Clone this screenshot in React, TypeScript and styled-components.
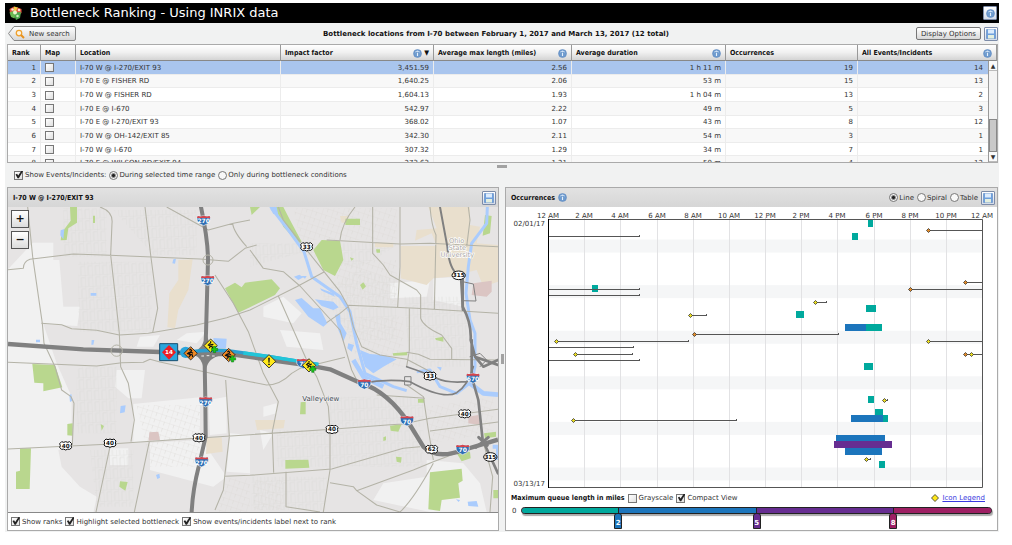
import React from "react";
import styled, { createGlobalStyle, css } from "styled-components";

const GlobalStyle = createGlobalStyle`
  *, *::before, *::after { box-sizing: border-box; }
  body {
    margin: 0;
    background: #fff;
    color: #333;
    font: 7px/10px "DejaVu Sans", Verdana, sans-serif;
  }
  button, input, output { font: inherit; color: inherit; margin: 0; }
`;

const boldFace = css`
  font-family: "DejaVu Sans Condensed", "DejaVu Sans", sans-serif;
  font-weight: 700;
  color: #111;
`;

const Page = styled.div`
  margin: 3px 13px 0 5px;
  background: #f1f2f2;
`;

const TitleBar = styled.header`
  display: flex;
  align-items: center;
  gap: 8px;
  height: 20px;
  padding: 0 2px 0 4px;
  background: #000;
`;

const Title = styled.h1`
  flex: 1;
  margin: 0;
  color: #fff;
  font-size: 13px;
  line-height: 18px;
  font-weight: 400;
`;

const IconButton = styled.button`
  display: grid;
  place-items: center;
  width: 14px;
  height: 14px;
  padding: 0;
  border: 1px solid #7d8ca8;
  border-radius: 1px;
  background: linear-gradient(#fff, #d3dbe8);
`;

const Toolbar = styled.div`
  display: flex;
  align-items: center;
  height: 21px;
  padding: 0 1px 0 3px;
`;

const Heading = styled.h2`
  flex: 1;
  margin: 0;
  text-align: center;
  font-size: 7px;
  line-height: 10px;
  color: #111;
`;

const BackButton = styled.button`
  position: relative;
  display: flex;
  align-items: center;
  gap: 4px;
  width: 68px;
  height: 15px;
  padding: 0 0 0 7px;
  border: 0;
  background: none;
  white-space: nowrap;

  & > svg, & > span { position: relative; }
  & > svg:first-child { position: absolute; left: 0; top: 0; }
`;

const OptionsButton = styled.button`
  width: 65px;
  height: 13px;
  margin-right: 3px;
  padding: 0;
  border: 1px solid #777;
  border-radius: 2px;
  background: linear-gradient(#fff, #d8d8d8);
  line-height: 10px;
  white-space: nowrap;
`;

const GridFrame = styled.div`
  position: relative;
  height: 119px;
  margin: 0 1px 0 2px;
  overflow: hidden;
  border: 1px solid #aaa;
  background: #fff;
`;

const Grid = styled.table`
  width: 100%;
  height: 125px;
  table-layout: fixed;
  border-collapse: separate;
  border-spacing: 0;
`;

const HeadCell = styled.th`
  ${boldFace}
  height: 16px;
  padding: 1px 4px 0;
  border-right: 1px solid #999;
  border-bottom: 1px solid #888;
  background: linear-gradient(#fff, #f0f0f0 50%, #d4d4d4);
  text-align: left;
  white-space: nowrap;
`;

const HeadInner = styled.div`
  display: flex;
  align-items: center;
  justify-content: space-between;
`;

const HeadTools = styled.span`
  display: flex;
  align-items: center;
  gap: 2px;
`;

const Row = styled.tr<{ $selected?: boolean }>`
  background: ${(p) => (p.$selected ? "#a9c5ee" : "#fff")};
  &:nth-child(even) { background: #f8f8f8; }
`;

const Cell = styled.td<{ $align?: "right"; $last?: boolean }>`
  padding: 1px ${(p) => (p.$last ? 13 : 4)}px 0 4px;
  border-right: 1px solid #ececec;
  border-bottom: 1px solid #ececec;
  text-align: ${(p) => p.$align ?? "left"};
  white-space: nowrap;
`;

const ScrollBar = styled.div`
  position: absolute;
  top: 16px;
  right: 0;
  bottom: 0;
  width: 9px;
  display: flex;
  flex-direction: column;
  justify-content: space-between;
  border-left: 1px solid #999;
  background: #f4f4f4;
`;

const ScrollButton = styled.button`
  height: 10px;
  padding: 0;
  border: 0;
  border-bottom: 1px solid #bbb;
  background: #fafafa;
  font-size: 6px;
  line-height: 9px;
`;

const ScrollThumb = styled.div`
  height: 33px;
  margin-top: auto;
  border: 1px solid #888;
  background: #c9c9c9;
`;

const Handle = styled.div<{ $vertical?: boolean }>`
  width: ${(p) => (p.$vertical ? 3 : 10)}px;
  height: ${(p) => (p.$vertical ? 10 : 3)}px;
  background: #a2a2a2;
  align-self: center;
  justify-self: center;
`;

const EventsBar = styled.section`
  display: flex;
  flex-direction: column;
  height: 24px;
  padding-top: 2px;
`;

const Options = styled.div`
  display: flex;
  align-items: center;
  gap: 3px;
`;

const EventsOptions = styled(Options)`
  padding: 2px 0 0 9px;
`;

const Choice = styled.label`
  display: inline-flex;
  align-items: center;
  gap: 2px;
  white-space: nowrap;
`;

const RadioChoice = styled(Choice)`
  gap: 1px;
`;

const CheckInput = styled.input.attrs({ type: "checkbox" })`
  appearance: none;
  display: block;
  position: relative;
  flex: none;
  width: 9px;
  height: 9px;
  border: 1px solid #777;
  background: linear-gradient(135deg, #fff, #e0e0e0);
  &:checked::after {
    content: "";
    position: absolute;
    left: 0;
    top: -1px;
    width: 8px;
    height: 8px;
    background: #222;
    clip-path: polygon(6% 50%, 26% 42%, 40% 64%, 82% 0, 100% 8%, 48% 96%, 32% 96%);
  }
`;

const RadioInput = styled.input.attrs({ type: "radio" })`
  appearance: none;
  flex: none;
  width: 9px;
  height: 9px;
  border: 1px solid #777;
  border-radius: 50%;
  background: #f8f8f8;
  &:checked { background: radial-gradient(#222 0 1px, #f8f8f8 3px); }
`;

const Panels = styled.main`
  display: grid;
  grid-template-columns: 492fr 6px 493fr;
  padding: 0 1px 1px 2px;
`;

const Panel = styled.section`
  display: flex;
  flex-direction: column;
  min-width: 0;
  border: 1px solid #aaa;
  background: #fff;
`;

const PanelHead = styled.header`
  display: flex;
  align-items: center;
  justify-content: space-between;
  height: 19px;
  padding: 0 2px 0 5px;
  background: linear-gradient(#e2e2e2, #d6d6d6);
`;

const PanelTitle = styled.h3`
  ${boldFace}
  display: flex;
  align-items: center;
  gap: 3px;
  margin: 0;
  font-size: 7px;
  line-height: 10px;
`;

const MapFrame = styled.div`
  position: relative;
  & > svg { display: block; width: 100%; height: auto; }
`;

const ZoomButtons = styled.div`
  position: absolute;
  left: 3px;
  top: 3px;
  display: grid;
  gap: 3px;
`;

const ZoomButton = styled.button`
  width: 18px;
  height: 18px;
  padding: 0;
  border: 1px solid #555;
  background: linear-gradient(#fff, #dcdcdc);
  color: #111;
  font-weight: 700;
  font-size: 11px;
  line-height: 14px;
`;

const MapFooter = styled.footer`
  display: flex;
  flex: 1;
  align-items: center;
  gap: 3px;
  min-height: 18px;
  padding: 0 3px;
  border-top: 1px solid #888;
`;

const ChartSvg = styled.svg`
  display: block;
  width: 100%;
  height: auto;
`;

const LegendRow = styled.div`
  display: flex;
  align-items: center;
  gap: 3px;
  height: 16px;
  padding: 0 12px 0 5px;
`;

const LegendTitle = styled.span`
  ${boldFace}
`;

const LegendLink = styled.a`
  display: flex;
  align-items: center;
  gap: 3px;
  margin-left: auto;
  color: #3a3ae0;
`;

const SliderRow = styled.div`
  display: flex;
  gap: 5px;
  padding: 0 5px 0 6px;
`;

const Track = styled.div`
  position: relative;
  display: flex;
  flex: 1;
  height: 7px;
  margin-top: 1px;
  border: 1px solid #222;
  border-radius: 4px;
  background: #9e1f63;
  box-shadow: 1px 2px 1px #aaa;
`;

const Segment = styled.div<{ $color: string; $size: number; $edge?: "start" | "end" }>`
  flex: ${(p) => p.$size} 1 0;
  background: ${(p) => p.$color};
  border-right: ${(p) => (p.$edge === "end" ? 0 : 1)}px solid #222;
  border-radius: ${(p) => (p.$edge === "start" ? "3px 0 0 3px" : p.$edge === "end" ? "0 3px 3px 0" : 0)};
`;

const Flag = styled.output<{ $color: string }>`
  position: absolute;
  top: 5px;
  width: 8px;
  height: 16px;
  padding-top: 4px;
  transform: translateX(-50%);
  background: ${(p) => p.$color};
  border: 1px solid #222;
  border-radius: 3px 3px 0 0;
  color: #fff;
  font-weight: 700;
  text-align: center;
`;

const RangeInput = styled.input.attrs({ type: "range" })`
  position: absolute;
  left: 0;
  top: 0;
  width: 100%;
  height: 100%;
  opacity: 0;
`;

const InfoIcon = () => (
  <svg width="9" height="9" viewBox="0 0 18 18" aria-hidden="true">
    <circle cx="9" cy="9" r="8" fill="#6f9bce" stroke="#5583bb" />
    <path d="M4.500 6a6 5 0 0 1 9 0" stroke="#c7ddf4" strokeWidth="2" fill="none" />
    <path d="M9 4.500v2M9 8v6" stroke="#e6f0fb" strokeWidth="2.200" />
  </svg>
);

const SaveIcon = () => (
  <svg width="10" height="10" viewBox="0 0 20 20" aria-hidden="true">
    <path d="M1 1h18v18H1z" fill="#6fa0dc" stroke="#4a7abb" />
    <path d="M4 1h12v8H4z" fill="#dcebfc" />
    <path d="M4 12h12v7H4z" fill="#e4eedd" />
  </svg>
);

const LogoIcon = () => (
  <svg width="13" height="14" viewBox="0 0 26 28" aria-hidden="true">
    <path d="M1 6l9-5 5 7-6 8-7-2z" fill="#e2523c" />
    <path d="M10 1l8 2 2 7-6 4-5-5z" fill="#f0cf45" />
    <path d="M1 13l8-3 5 6-3 9-7-3z" fill="#6cb852" />
    <path d="M17 3l8 3v8l-6 5-6-6z" fill="#e35a42" />
    <path d="M13 13l11-1-2 12-8 4-3-8z" fill="#4fa84f" />
    <circle cx="12" cy="13" r="4" fill="#eef5cf" />
    <circle cx="7" cy="7" r="2.500" fill="#fbe3dc" />
    <circle cx="20" cy="8" r="2.500" fill="#fbe3dc" />
    <circle cx="17" cy="20" r="2.500" fill="#d3efc0" />
  </svg>
);

const columns = [
  { name: "Rank", width: 33 },
  { name: "Map", width: 35 },
  { name: "Location", width: 205 },
  { name: "Impact factor", width: 153, info: true, sort: true },
  { name: "Average max length (miles)", width: 138, info: true },
  { name: "Average duration", width: 154, info: true },
  { name: "Occurrences", width: 132 },
  { name: "All Events/Incidents", width: 139, info: true },
];

const rows = [
  ["1", "I-70 W @ I-270/EXIT 93", "3,451.59", "2.56", "1 h 11 m", "19", "14"],
  ["2", "I-70 E @ FISHER RD", "1,640.25", "2.06", "53 m", "15", "13"],
  ["3", "I-70 W @ FISHER RD", "1,604.13", "1.93", "1 h 04 m", "13", "2"],
  ["4", "I-70 E @ I-670", "542.97", "2.22", "49 m", "5", "3"],
  ["5", "I-70 E @ I-270/EXIT 93", "368.02", "1.07", "43 m", "8", "12"],
  ["6", "I-70 W @ OH-142/EXIT 85", "342.30", "2.11", "54 m", "3", "1"],
  ["7", "I-70 W @ I-670", "307.32", "1.29", "34 m", "7", "1"],
  ["8", "I-70 E @ WILSON RD/EXIT 94", "273.63", "1.21", "50 m", "4", "12"],
];

/* Map artwork: three units to the pixel. */
const ROAD = "#b4b3a7";
const PARK = "#b9d78e";
const WATER = "#aaccfd";
const TAN = "#e9dfcd";
const LIGHT = "#f1f1f1";

const Interstate = ({ x, y, n }: { x: number; y: number; n: string }) => (
  <g transform={`translate(${x} ${y})`}>
    <path d="M-18-13Q-9-10 0-14Q9-10 18-13Q24 2 12 10L0 16L-12 10Q-24 2-18-13z" fill="#2f6fb5" stroke="#f4f4f4" strokeWidth="2" />
    <path d="M-18-13Q-9-10 0-14Q9-10 18-13L20-7H-20z" fill="#d8454b" />
    <text y="9" fontSize="18" fontWeight="700" fill="#fff" textAnchor="middle">{n}</text>
  </g>
);

const Route = ({ x, y, n }: { x: number; y: number; n: string }) => (
  <g transform={`translate(${x} ${y})`}>
    <path d="M-12-12Q-6-8 0-12Q6-8 12-12L18-6Q14 0 18 6L12 11Q6 9 0 13Q-6 9-12 11L-18 6Q-14 0-18-6z" fill="#fff" stroke="#111" strokeWidth="3" />
    <text y="6" fontSize="17" fontWeight="700" fill="#111" textAnchor="middle">{n}</text>
  </g>
);

const StateRoute = ({ x, y, n }: { x: number; y: number; n: string }) => (
  <g transform={`translate(${x} ${y})`}>
    <ellipse rx="20" ry="13" fill="#fff" stroke="#111" strokeWidth="3" />
    <text y="6" fontSize="17" fontWeight="700" fill="#111" textAnchor="middle">{n}</text>
  </g>
);

type SignProps = { x: number; y: number; kind: "alert" | "work" | "crash"; plus?: boolean };
const Sign = ({ x, y, kind, plus }: SignProps) => (
  <g transform={`translate(${x} ${y})`}>
    <path d="M0-20L20 0L0 20L-20 0z" fill={kind === "work" ? "#f08a24" : "#ffe81a"} stroke="#222" strokeWidth="2.500" strokeLinejoin="round" />
    {kind === "alert" && <path d="M-2.500-11H2.500L1.500 4H-1.500zM-2.500 7H2.500V11H-2.500z" fill="#111" />}
    {kind === "work" && <path d="M-4-9l4-3 3 4-3 4 7 4M0-4l-6 6 5 4-5 6M-3 2l8 3 1 6M-11 2l8-6" stroke="#111" strokeWidth="3.500" fill="none" />}
    {kind === "crash" && <path d="M0-13v5M-2-7l-5 5 6 3-3 7M-2-6l6 4 4-3M-1 1l6 3 1 6" stroke="#111" strokeWidth="3.500" fill="none" />}
    {plus && <path d="M8 2h7v6h6v7h-6v6H8v-6H2V8h6z" fill="#19c51b" stroke="#0c6f12" strokeWidth="1.500" />}
  </g>
);

const MapArt = () => (
  <svg viewBox="24 21 1470 915" role="img" aria-label="Map of bottleneck locations">
    <defs>
      <pattern id="streets" width="22" height="34" patternUnits="userSpaceOnUse" patternTransform="rotate(-3)">
        <path d="M0 0H22M0 0V34M11 8V34M11 8H22" stroke="#d9d8d4" strokeWidth="1.400" fill="none" />
      </pattern>
      <pattern id="streets2" width="30" height="20" patternUnits="userSpaceOnUse" patternTransform="rotate(18)">
        <path d="M0 0H30M0 0V20M15 0V12" stroke="#dad9d5" strokeWidth="1.400" fill="none" />
      </pattern>
    </defs>
    <path d="M0 0H1500V940H0z" fill="#e6e4e4" />

    <g fill={LIGHT}>
      <path d="M24 208L98 128H160V180H178L190 320H240L232 378L130 372L170 490L215 590V735L175 750L185 800L240 860L290 890L280 940H24z" />
      <path d="M350 510H435L425 595H385L345 560zM400 612L600 592V712L400 728zM450 728L605 720L680 830L640 860L450 810zM625 600L680 590V700L630 705zM690 700L750 705V820L680 815zM330 745H385V795H330z" />
      <path d="M560 400L620 395L590 430L530 420zM420 410L480 405L460 440L410 440z" />
      <path d="M790 320L850 290L905 340L880 370L790 350zM840 390L960 400L970 450L860 440zM1300 235L1390 230V320L1300 300zM1170 250L1290 240L1280 290L1170 295zM790 620L830 610V640L790 650zM1150 850L1280 830V780L1390 790L1440 850L1460 936H1290L1120 900zM780 690L820 700L790 750z" />
    </g>
    <g fill="url(#streets)">
      <path d="M190 25H320V170H190zM235 185H455V395H235zM340 30H590V165H460zM230 500H350V700H230zM270 750H400V920H290z" />
      <path d="M1200 130H750V200L900 160L1190 240V420H1060L960 280zM1210 290H1400V500H1230zM830 690H1270V800H1000L830 800zM990 590H1270V680H990zM755 830H980V930H755z" />
    </g>
    <g fill="url(#streets2)">
      <path d="M880 25H1190V120H900zM980 180H1190V310H1050zM410 615H600V800H450zM680 835H750V935H650zM760 840H850V930H760zM1020 350H1210V500H1080zM1280 620L1480 590V700L1290 730z" />
    </g>

    <g fill={TAN}>
      <path d="M535 180L578 178L565 270L535 330L525 385L502 382L508 280L535 240z" />
      <path d="M1285 21H1410V75L1440 80L1430 130L1495 135V245L1450 260L1430 210L1350 230L1300 235L1280 255L1202 235V138H1310L1295 100L1245 122L1250 90L1310 85zM1125 128h55v14h-55zM1020 48h25v20h-20zM620 713L665 712L668 755L618 762zM765 660h90l-4 25-80 5z" />
    </g>
    <g fill="#dbc5c3">
      <path d="M1420 250L1475 242V275L1460 290L1415 285zM448 697L475 695L480 720L446 722zM1405 650L1435 645L1440 675L1405 670z" />
    </g>
    <g fill={PARK}>
      <path d="M210 21H231V68L205 85L200 120L182 121L185 98L212 62zM279 47h6v22h-6zM675 265L705 248L725 262L735 248L750 246L815 238L840 265L825 285L750 322L715 338z" />
      <path d="M97 492L165 495L187 562L130 574V550L103 548zM202 672L218 670V707L202 706zM60 745H93L89 867H48V815L60 812zM302 672L312 678L305 692zM360 844L383 846L376 872L358 860z" />
      <path d="M750 21H780L755 45zM825 21H850L870 60L905 125L895 130L850 80zM940 150L965 120L1020 122L1030 180L1005 228L970 210zM1036 56H1080V75H1036zM1050 172l12 4-8 6zM1080 255l10-8 8 12-10 10zM1128 148h12v10h-10zM1455 45L1475 48L1470 100L1448 107zM1305 415L1330 410V425L1308 420zM1178 460L1222 456V466L1180 467z" />
      <path d="M902 607L917 605V643H900zM856 780L925 779L928 803L856 806zM1254 597H1273V608H1254zM1170 677L1205 673L1195 695L1172 692zM1188 770L1205 772L1203 788L1190 785zM1150 712l8-3v12l-8 2zM1290 817L1385 806L1388 842L1375 850L1380 893L1325 900L1320 933L1285 928zM1370 760L1410 755L1412 775L1385 784zM1452 700L1488 695V710L1455 715zM1480 870h14v25h-14z" />
    </g>
    <g fill={WATER}>
      <path d="M182 91L193 87L190 118L181 106zM520 178L528 176L525 191L517 190zM272 279h17v8h-17zM108 419h12v8h-12zM275 420h8l-3 14h-6zM208 585l6-3 3 20-7 4zM362 618L377 616L374 637L360 640zM640 414L680 416L678 445L645 443zM468 825l10-4 2 12-8 4z" />
      <path d="M808 21H830L835 45L820 42zM882 230L898 224L910 232L895 240zM905 228h15l-5 8zM885 300L905 294L940 325L960 325L982 370L970 380L925 350zM945 298L1000 305L1016 322L1000 330L965 318zM960 265L1000 280L1005 290L965 272zM1005 345L1020 342L1022 370L1040 400L1030 425L1015 390zM1045 430L1062 435L1055 455L1042 445zM1080 450L1110 462L1150 465L1190 478L1150 500L1120 520L1095 500zM1310 500L1325 502L1322 512zM1403 905L1430 903L1435 920L1405 918zM1368 898l12 2-4 6z" />
    </g>
    <g fill="none" stroke={WATER} strokeLinejoin="round">
      <path d="M815 25L865 90L912 155L935 230L1020 290L1050 335L1070 430L1095 520L1180 560L1220 572" strokeWidth="9" />
      <path d="M1462 21L1460 70L1415 130L1405 200L1398 280L1410 360L1425 400L1425 500L1415 545L1370 580L1320 560L1290 510L1250 515" strokeWidth="9" />
      <path d="M1410 550L1450 580L1494 584" strokeWidth="14" />
      <path d="M1060 480L1090 530L1150 560" strokeWidth="14" />
      <path d="M1478 740l16 0v40" strokeWidth="12" />
    </g>

    <g fill="none" stroke={ROAD} strokeWidth="3.200" strokeLinejoin="round">
      <path d="M83 21L98 170L127 370L132 430L165 500L185 570L213 590L222 610L217 735M24 209L70 205Q70 185 90 178L220 162L330 166L600 177L685 184L735 145L770 135M300 21Q340 35 336 70L332 165L345 280L358 400L362 500L385 550L403 660L393 725M435 21L452 165L473 325L458 398" />
      <path d="M124 370L185 374L215 386L290 391L358 405L445 400L590 375L680 353L750 330L890 260L972 216M24 487L290 498L365 488L430 487L450 478L480 486L680 530L750 545L800 555Q840 555 875 520L900 505L1035 472" />
      <path d="M24 747L320 733L610 713L750 704L995 688L1170 674L1210 672L1290 655L1494 628M330 740L288 936M448 725L403 936M500 21L625 90L700 70L750 60M698 70Q700 95 740 140M645 225L700 310L745 395L790 520L835 605L817 695L821 818M835 288L920 480M677 540L688 710L674 830L670 870L645 930M674 829L750 826L995 807L1210 745L1260 740" />
      <path d="M750 150L790 205L850 215L900 258L1020 390L1055 510L1070 540M835 21L850 60L900 125L972 215L1020 275L1045 320L1060 380L1085 440L1140 465L1220 478L1300 520M1065 21Q1025 70 1020 120M980 120L1200 132L1290 130L1494 140M1118 21V160L1150 195L1170 225L1250 270L1262 285V355Q1270 380 1325 405L1355 445V480M1200 21V200L1193 322M1290 21Q1295 80 1308 105L1303 328M1405 21L1410 60L1400 140M1045 316L1250 325L1494 340M1045 320L1020 340L980 368" />
      <path d="M1228 325V450L1220 500M1220 457L1255 463L1290 478L1494 480M920 480L950 530L985 620L990 690V810L970 936M858 815V920L960 936M990 848L1060 860L1070 872L1130 915L1200 936M1070 872L1240 810L1300 785L1420 740M1200 936Q1240 900 1300 790M1220 555L1270 590L1285 690L1300 780M1290 693L1494 666M1130 585L1275 595M1448 720L1478 830L1470 936" />
    </g>

    <g fill="none" stroke="#808080" strokeLinecap="round" strokeLinejoin="round">
      <path d="M603 21Q624 120 624 180L618 400L614 490L616 600L617 710L596 800Q578 870 575 936" strokeWidth="12" />
      <path d="M24 432L250 448L480 456L620 462L690 462L810 480L930 497L990 508L1080 548Q1165 575 1230 675L1270 740Q1310 780 1390 750L1494 719" strokeWidth="13" strokeLinecap="butt" />
      <path d="M618 408Q616 446 580 460Q610 470 615 508Q620 470 665 462Q624 448 618 408z" fill="#808080" strokeWidth="7" />
      <path d="M1320 21L1342 140Q1348 215 1382 230L1388 330" strokeWidth="6" />
      <path d="M1388 235V320Q1415 370 1412 420L1425 470L1494 495M1415 420V530L1435 600L1448 720L1494 820M1425 470L1450 500L1494 480" strokeWidth="8" />
      <path d="M1085 550Q1160 535 1230 545Q1330 600 1370 578Q1405 555 1420 500M1220 500Q1280 520 1310 535T1400 545L1415 530" strokeWidth="5" />
      <path d="M1388 245L1420 252L1428 303L1385 302" strokeWidth="3" />
      <path d="M1428 742L1465 712M1436 712L1462 736" strokeWidth="9" />
      <path d="M1215 530h18v25h-18zM1410 470L1440 460L1460 480L1440 500" strokeWidth="3" />
    </g>
    <g fill="none" stroke={ROAD} strokeWidth="3">
      <circle cx="350" cy="452" r="17" />
      <circle cx="624" cy="180" r="15" />
    </g>
    <path d="M604 468h8M620 467h8M636 468h8" stroke="#eee" strokeWidth="3" />

    <path d="M555 457Q640 446 700 454L810 470L955 493" fill="none" stroke="#2d9fd0" strokeWidth="10" />
    <path d="M730 459L810 470L955 493" fill="none" stroke="#22c5d8" strokeWidth="10" />
    <circle cx="557" cy="457" r="17" fill="#2aa5dc" />

    <Interstate x={611} y={61} n="270" />
    <Interstate x={623} y={241} n="270" />
    <Interstate x={617} y={605} n="270" />
    <Interstate x={605} y={785} n="270" />
    <Interstate x={910} y={490} n="70" />
    <Interstate x={1093} y={552} n="70" />
    <Interstate x={1221} y={662} n="70" />
    <Interstate x={1388} y={748} n="70" />
    <Interstate x={1419} y={534} n="670" />
    <Route x={197} y={737} n="40" />
    <Route x={330} y={729} n="40" />
    <Route x={597} y={713} n="40" />
    <Route x={920} y={140} n="33" />
    <Route x={1290} y={528} n="33" />
    <Route x={1394} y={641} n="40" />
    <Route x={996} y={688} n="40" />
    <Route x={1295} y={748} n="62" />
    <StateRoute x={1376} y={226} n="315" />
    <StateRoute x={1471} y={771} n="315" />

    <g fontSize="20" fill="#aaa69f" stroke="#fff" strokeWidth="4" paintOrder="stroke" textAnchor="middle">
      <text x="1370" y="129">Ohio</text>
      <text x="1372" y="150">State</text>
      <text x="1372" y="171">University</text>
    </g>
    <text x="907" y="604" fontSize="21" fill="#414852" stroke="#f3f3f3" strokeWidth="3" paintOrder="stroke">Valleyview</text>

    <g>
      <path d="M479 431H533V482H479z" fill="#2aa5dc" stroke="#184f70" strokeWidth="3" />
      <path d="M507 435L528 457L507 479L486 457z" fill="#ed1c24" />
      <text x="507" y="463" fontSize="17" fontWeight="700" fill="#fff" textAnchor="middle">14</text>
      <path d="M534 450L541 457L534 464z" fill="#184f70" />
    </g>
    <Sign x={572} y={460} kind="work" />
    <Sign x={632} y={437} kind="crash" plus />
    <Sign x={686} y={465} kind="work" plus />
    <Sign x={807} y={484} kind="alert" />
    <Sign x={927} y={496} kind="crash" plus />
  </svg>
);

const TEAL = "#00a99d";
const BLUE = "#1c75bc";
const PURPLE = "#662d91";
const MAROON = "#9e1f63";

const plot = { left: 548, right: 982, top: 220, bottom: 487, days: 41 };
const dayY = (day: number) => plot.top + (day * (plot.bottom - plot.top)) / plot.days;
const hours = ["12 AM", "2 AM", "4 AM", "6 AM", "8 AM", "10 AM", "12 PM", "2 PM", "4 PM", "6 PM", "8 PM", "10 PM", "12 AM"];
const hourX = (i: number) => Math.round(plot.left + (i * (plot.right - plot.left)) / 12);

const bars: [number, number, number, string][] = [
  [0, 868, 873, TEAL], [2, 852, 858, TEAL], [10, 592, 598, TEAL], [13, 866, 876, TEAL],
  [14, 796, 804, TEAL], [16, 845, 866, BLUE], [16, 866, 882, TEAL], [22, 864, 873, TEAL],
  [27, 868, 874, TEAL], [29, 875, 883, TEAL], [30, 851, 883, BLUE], [30, 883, 888, TEAL],
  [33, 836, 885, BLUE], [34, 834, 892, PURPLE], [35, 845, 882, BLUE], [37, 879, 885, TEAL],
];

const YELLOW = "#e9dc1f";
const ORANGE = "#e08a28";
const events: [number, number, number, string?][] = [
  [236, 549, 640], [289, 549, 640], [295, 549, 640], [315, 690, 707, YELLOW],
  [334, 694, 839, ORANGE], [341, 556, 689, YELLOW], [347, 549, 634], [354, 575, 633, YELLOW],
  [360, 549, 640], [420, 573, 737, YELLOW], [230, 928, 982, ORANGE], [282, 965, 982, ORANGE],
  [289, 910, 982, ORANGE], [302, 815, 827, YELLOW], [341, 928, 982, YELLOW], [354, 965, 982, ORANGE],
  [354, 971, 982, YELLOW], [400, 884, 888, YELLOW], [459, 866, 871, YELLOW],
];

const OccurrenceChart = () => (
  <ChartSvg viewBox="506 207 491 283" role="img" aria-label="Occurrences by day and hour">
    {[3, 10, 17, 24, 31, 38].map((d) => (
      <rect key={d} x={plot.left} y={dayY(d)} width={plot.right - plot.left} height={dayY(2) - plot.top} fill="#f5f6f7" />
    ))}
    {hours.map((label, i) => (
      <g key={i}>
        <path d={`M${hourX(i) + 0.5} 217V${plot.bottom}`} stroke="#e2e2e4" />
        <text x={hourX(i)} y="218" fontSize="7" fill="#333" textAnchor="middle">{label}</text>
      </g>
    ))}
    {bars.map(([day, x1, x2, color], i) => (
      <rect key={i} x={x1} y={Math.round(dayY(day))} width={x2 - x1} height="7" fill={color} />
    ))}
    {events.map(([y, x1, x2, color], i) => (
      <g key={i}>
        <path d={`M${x1} ${y + 0.5}H${x2}`} stroke="#555" />
        {x2 < plot.right && <path d={`M${x2 - 0.5} ${y - 1}v2`} stroke="#555" />}
        {color && <path d={`M${x1 + 0.5} ${y - 1.5}l2 2l-2 2l-2-2z`} fill={color} stroke="#333" strokeWidth="0.8" />}
      </g>
    ))}
    <path d="M548 219.500H982.500V487.500H548" fill="none" stroke="#555" />
    <path d="M548.500 219V488" stroke="#000" />
    <text x="545" y="226" fontSize="7" fill="#333" textAnchor="end">02/01/17</text>
    <text x="545" y="486" fontSize="7" fill="#333" textAnchor="end">03/13/17</text>
  </ChartSvg>
);

const stops = [
  { value: 2, at: 96, color: BLUE },
  { value: 5, at: 235, color: PURPLE },
  { value: 8, at: 372, color: MAROON },
];

export default function App() {
  return (
    <Page>
      <GlobalStyle />
      <TitleBar>
        <LogoIcon />
        <Title>Bottleneck Ranking - Using INRIX data</Title>
        <IconButton aria-label="Help"><InfoIcon /></IconButton>
      </TitleBar>

      <Toolbar>
        <BackButton>
          <svg width="68" height="15" viewBox="0 0 68 15" aria-hidden="true">
            <defs>
              <linearGradient id="back" x2="0" y2="1"><stop stopColor="#fff" /><stop offset="1" stopColor="#d6d6d6" /></linearGradient>
            </defs>
            <path d="M6 .5H66Q67.500.5 67.500 2V13Q67.500 14.500 66 14.500H6L.5 7.500z" fill="url(#back)" stroke="#888" />
          </svg>
          <svg width="10" height="10" viewBox="0 0 20 20" aria-hidden="true">
            <circle cx="8" cy="8" r="5.500" fill="#fdf3df" stroke="#efa02c" strokeWidth="2.500" />
            <path d="M12 12l6 6" stroke="#e8901c" strokeWidth="4" />
          </svg>
          <span>New search</span>
        </BackButton>
        <Heading>Bottleneck locations from I-70 between February 1, 2017 and March 13, 2017 (12 total)</Heading>
        <OptionsButton>Display Options</OptionsButton>
        <IconButton aria-label="Save"><SaveIcon /></IconButton>
      </Toolbar>

      <GridFrame>
        <Grid>
          <colgroup>
            {columns.map((c) => <col key={c.name} width={c.width} />)}
          </colgroup>
          <thead>
            <tr>
              {columns.map((c) => (
                <HeadCell key={c.name} scope="col">
                  <HeadInner>
                    {c.name}
                    <HeadTools>{c.info && <InfoIcon />}{c.sort && <span>▼</span>}</HeadTools>
                  </HeadInner>
                </HeadCell>
              ))}
            </tr>
          </thead>
          <tbody>
            {rows.map(([rank, location, ...values], i) => (
              <Row key={rank} $selected={i === 0}>
                <Cell $align="right">{rank}</Cell>
                <Cell><CheckInput aria-label={`Show ${location} on map`} /></Cell>
                <Cell>{location}</Cell>
                {values.map((v, j) => (
                  <Cell key={j} $align="right" $last={j === values.length - 1}>{v}</Cell>
                ))}
              </Row>
            ))}
          </tbody>
        </Grid>
        <ScrollBar>
          <ScrollButton aria-label="Scroll up">▲</ScrollButton>
          <ScrollThumb />
          <ScrollButton aria-label="Scroll down">▼</ScrollButton>
        </ScrollBar>
      </GridFrame>

      <EventsBar>
        <Handle />
        <EventsOptions>
          <Choice><CheckInput defaultChecked />Show Events/Incidents:</Choice>
          <RadioChoice><RadioInput name="range" defaultChecked />During selected time range</RadioChoice>
          <RadioChoice><RadioInput name="range" />Only during bottleneck conditions</RadioChoice>
        </EventsOptions>
      </EventsBar>

      <Panels>
        <Panel>
          <PanelHead>
            <PanelTitle>I-70 W @ I-270/EXIT 93</PanelTitle>
            <IconButton aria-label="Save map"><SaveIcon /></IconButton>
          </PanelHead>
          <MapFrame>
            <MapArt />
            <ZoomButtons>
              <ZoomButton aria-label="Zoom in">+</ZoomButton>
              <ZoomButton aria-label="Zoom out">−</ZoomButton>
            </ZoomButtons>
          </MapFrame>
          <MapFooter>
            <Choice><CheckInput defaultChecked />Show ranks</Choice>
            <Choice><CheckInput defaultChecked />Highlight selected bottleneck</Choice>
            <Choice><CheckInput defaultChecked />Show events/incidents label next to rank</Choice>
          </MapFooter>
        </Panel>

        <Handle $vertical />

        <Panel>
          <PanelHead>
            <PanelTitle>Occurrences <InfoIcon /></PanelTitle>
            <Options>
              <RadioChoice><RadioInput name="view" defaultChecked />Line</RadioChoice>
              <RadioChoice><RadioInput name="view" />Spiral</RadioChoice>
              <RadioChoice><RadioInput name="view" />Table</RadioChoice>
              <IconButton aria-label="Save chart"><SaveIcon /></IconButton>
            </Options>
          </PanelHead>
          <OccurrenceChart />
          <LegendRow>
            <LegendTitle>Maximum queue length in miles</LegendTitle>
            <Choice><CheckInput />Grayscale</Choice>
            <Choice><CheckInput defaultChecked />Compact View</Choice>
            <LegendLink href="#legend">
              <svg width="8" height="8" viewBox="0 0 16 16" aria-hidden="true">
                <path d="M8 1l7 7-7 7-7-7z" fill="#ffe81a" stroke="#222" strokeWidth="1.500" />
              </svg>
              Icon Legend
            </LegendLink>
          </LegendRow>
          <SliderRow>
            <span>0</span>
            <Track>
              <Segment $color={TEAL} $size={96} $edge="start" />
              <Segment $color={BLUE} $size={139} />
              <Segment $color={PURPLE} $size={137} />
              <Segment $color={MAROON} $size={98} $edge="end" />
              {stops.map((s) => (
                <React.Fragment key={s.value}>
                  <RangeInput aria-label={`Queue length limit ${s.value} miles`} min={0} max={10} defaultValue={s.value} />
                  <Flag $color={s.color} style={{ left: `${(s.at / 470) * 100}%` }}>{s.value}</Flag>
                </React.Fragment>
              ))}
            </Track>
          </SliderRow>
        </Panel>
      </Panels>
    </Page>
  );
}
